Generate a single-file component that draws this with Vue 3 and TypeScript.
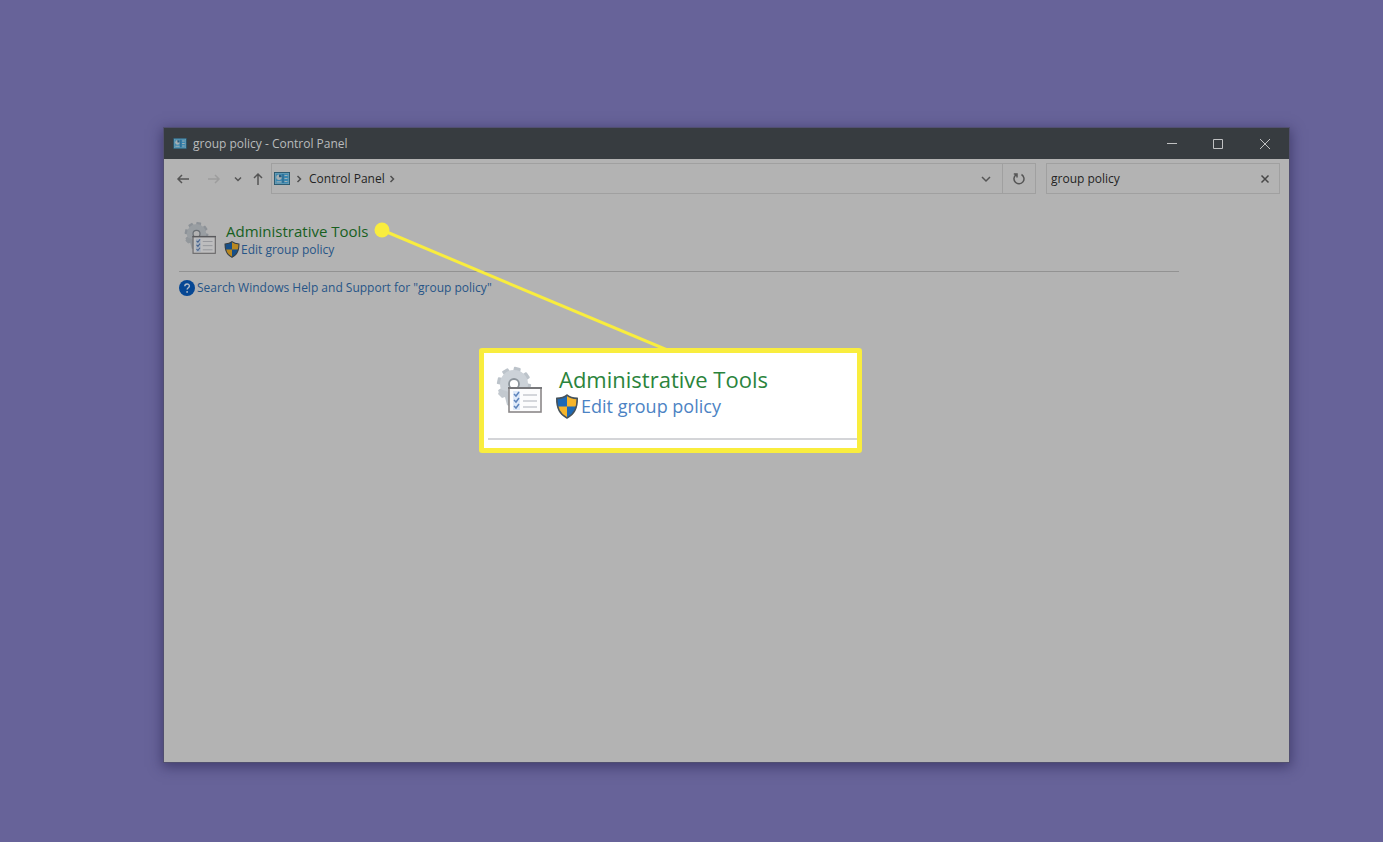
<script setup lang="ts">
import { ref } from 'vue'

const query = ref('group policy')
const teeth = [0, 45, 90, 135, 180, 225, 270, 315]
</script>

<template>
  <main class="desktop">
    <svg class="defs" width="0" height="0" aria-hidden="true">
      <defs>
        <symbol id="panel" viewBox="0 0 16 13">
          <rect x="0.5" y="0.5" width="15" height="12" fill="#4fb4ea" stroke="#35718f" />
          <rect x="1.300" y="1.300" width="13.400" height="10.400" fill="none" stroke="#93d3f0" stroke-width="0.8" />
          <circle cx="5" cy="5.200" r="2.700" fill="#dce9ee" />
          <path d="M5 5.200V2.500A2.700 2.700 0 0 1 7.700 5.200Z" fill="#2f78a8" />
          <path d="M2.500 9.800H7.500M10.500 3.500h3M10.500 6.500h3M10.500 9.500h3" stroke="#d8e9ef" stroke-width="1.200" />
          <path d="M9 2v9" stroke="#2f7fb3" />
        </symbol>
        <symbol id="shield" viewBox="0 0 22 24">
          <path d="M11 1C8 3.4 4.700 4 1.200 4.200C1 12 2.600 19 11 23C19.400 19 21 12 20.800 4.200C17.300 4 14 3.400 11 1Z" fill="#f6b52b" />
          <path d="M11 1C8 3.400 4.700 4 1.200 4.200C1.100 7 1.300 9.700 2 12H11ZM11 12H20C18.500 17 15.800 20.800 11 23Z" fill="#1d69b5" />
          <path d="M11 1C8 3.400 4.700 4 1.200 4.200C1 12 2.600 19 11 23C19.400 19 21 12 20.800 4.200C17.300 4 14 3.400 11 1Z" fill="none" stroke="#46525b" stroke-width="1.500" />
        </symbol>
        <symbol id="tools" viewBox="0 0 46 48">
          <g fill="#bcc3ca">
            <rect v-for="angle in teeth" :key="angle" x="14.500" y="1" width="7" height="9" rx="1" :transform="`rotate(${angle + 12} 18 18)`" />
          </g>
          <circle cx="18" cy="18" r="9.500" fill="none" stroke="#ccd2d8" stroke-width="9" />
          <circle cx="18" cy="18" r="5" fill="none" stroke="#8c949b" stroke-width="1.800" />
          <path d="M4 23l-2 5 4 4 3-1 2 8 2 1V26z" fill="#c3c9cf" />
          <rect x="13" y="22" width="32" height="24" fill="#fcfcfd" stroke="#8b8889" stroke-width="1.600" />
          <path d="M12 22H46" stroke="#77777a" stroke-width="2" />
          <rect x="17" y="25" width="7" height="19" fill="#dfeafa" />
          <path d="M18 28l2 2 3-4M18 34l2 2 3-4M18 40l2 2 3-4" fill="none" stroke="#5f85bd" stroke-width="1.500" />
          <path d="M27 29H41M27 35H41M27 41H41" stroke="#c6c9cf" stroke-width="1.400" />
        </symbol>
      </defs>
    </svg>

    <section class="window">
      <header class="titlebar">
        <svg class="app-icon dim" aria-hidden="true"><use href="#panel" /></svg>
        <h1>group policy - Control Panel</h1>
        <div class="captions">
          <button type="button" aria-label="Minimize"><svg width="12" height="12"><path d="M1 5.500H11" /></svg></button>
          <button type="button" aria-label="Maximize"><svg width="12" height="12"><path d="M1.500 1.500H10.500V10.500H1.500Z" /></svg></button>
          <button type="button" aria-label="Close"><svg width="12" height="12"><path d="M1 1L11 11M11 1L1 11" /></svg></button>
        </div>
      </header>

      <nav class="toolbar" aria-label="Navigation">
        <div class="history">
          <button type="button" class="arrow" aria-label="Back"><svg width="14" height="12"><path d="M13 6H2M6 2L2 6L6 10" /></svg></button>
          <button type="button" class="arrow faded" aria-label="Forward" disabled><svg width="14" height="12"><path d="M1 6H12M8 2L12 6L8 10" /></svg></button>
          <button type="button" class="recent" aria-label="Recent locations"><svg width="8" height="8"><path d="M1 2.500L4 5.500L7 2.500" /></svg></button>
          <button type="button" class="up" aria-label="Up"><svg width="12" height="14"><path d="M6 13V2M2 6L6 2L10 6" /></svg></button>
        </div>
        <div class="address">
          <svg class="place-icon dim" aria-hidden="true"><use href="#panel" /></svg>
          <svg class="chevron" width="6" height="8" aria-hidden="true"><path d="M1.500 1L4.500 4L1.500 7" /></svg>
          <a class="crumb" href="#">Control Panel</a>
          <svg class="chevron" width="6" height="8" aria-hidden="true"><path d="M1.500 1L4.500 4L1.500 7" /></svg>
          <button type="button" class="expand" aria-label="Previous locations"><svg width="10" height="8"><path d="M1 2L5 6L9 2" /></svg></button>
          <button type="button" class="refresh" aria-label="Refresh"><svg width="14" height="14"><path d="M9.500 2.500A5 5 0 1 1 4 2.800M1.800 2H5V5.500" /></svg></button>
        </div>
        <div class="search">
          <input v-model="query" type="text" aria-label="Search Control Panel" />
          <button type="button" aria-label="Clear search" @click="query = ''"><svg width="10" height="10"><path d="M1.500 1.500L8.500 8.500M8.500 1.500L1.500 8.500" /></svg></button>
        </div>
      </nav>

      <div class="content">
        <article class="result">
          <svg class="tools-icon dim" aria-hidden="true"><use href="#tools" /></svg>
          <div class="links">
            <a class="category" href="#">Administrative Tools</a>
            <a class="task" href="#"><svg class="shield dim" aria-hidden="true"><use href="#shield" /></svg>Edit group policy</a>
          </div>
        </article>
        <a class="help" href="#">
          <svg width="16" height="16" viewBox="0 0 16 16" aria-hidden="true">
            <circle cx="8" cy="8" r="8" fill="#064794" />
            <path d="M5.800 6.200C5.800 3.300 10.400 3.300 10.400 6C10.400 7.700 8.100 7.800 8.100 9.600" fill="none" stroke="#b3bdc9" stroke-width="1.400" />
            <circle cx="8.100" cy="11.900" r="0.900" fill="#b3bdc9" />
          </svg>Search Windows Help and Support for "group policy"
        </a>
      </div>

      <svg class="leader" width="300" height="130" aria-hidden="true">
        <path d="M8 8L298 130" stroke="#f9ed3e" stroke-width="3" />
        <circle cx="8" cy="8" r="7.500" fill="#f9ed3e" />
      </svg>
      <aside class="callout" aria-label="Enlarged result">
        <div class="zoomed">
          <svg class="tools-icon" aria-hidden="true"><use href="#tools" /></svg>
          <div class="links">
            <a class="category" href="#">Administrative Tools</a>
            <a class="task" href="#"><svg class="shield" aria-hidden="true"><use href="#shield" /></svg>Edit group policy</a>
          </div>
        </div>
      </aside>
    </section>
  </main>
</template>

<style>
body {
  margin: 0;
}
</style>

<style scoped>
* {
  box-sizing: border-box;
}
.desktop {
  display: flex;
  min-height: 100vh;
  padding: 128px 94px 80px 164px;
  background: #676399;
  font: 12px/16px "Open Sans", "Noto Sans", sans-serif;
}
.defs {
  position: absolute;
}
svg {
  display: block;
  flex: none;
}
button {
  display: flex;
  align-items: center;
  justify-content: center;
  padding: 0;
  border: 0;
  background: none;
}
button svg path,
.chevron path {
  fill: none;
  stroke: currentColor;
}
a {
  text-decoration: none;
}
.dim {
  filter: brightness(0.75);
}
.window {
  position: relative;
  flex: 1;
  background: #b3b3b3;
  box-shadow: 0 0 0 1px #514f70, 0 3px 12px 2px rgba(35, 30, 75, 0.55);
}
.titlebar {
  display: flex;
  align-items: center;
  height: 31px;
  padding-left: 9px;
  background: #373c40;
  color: #b9bbbc;
}
.app-icon {
  width: 14px;
  height: 11px;
}
h1 {
  flex: 1;
  margin: 0 0 0 6px;
  font-size: 12px;
  font-weight: 400;
}
.captions {
  display: flex;
}
.captions button {
  width: 46px;
  height: 31px;
  color: #c0c1c2;
}
.captions button:last-child {
  width: 48px;
}
.toolbar {
  display: flex;
  align-items: center;
  height: 39px;
  padding-right: 9px;
  color: #505050;
}
.history {
  display: flex;
  align-items: center;
  width: 107px;
  padding-left: 12px;
}
.history button {
  height: 24px;
  color: #555;
}
.history svg,
.expand svg,
.refresh svg {
  stroke-width: 1.5;
}
.arrow {
  width: 14px;
  margin-right: 17px;
}
.history .faded {
  color: #9d9d9d;
}
.recent {
  width: 8px;
  margin-left: -4px;
}
.up {
  width: 12px;
  margin-left: 10px;
}
.address,
.search {
  display: flex;
  align-items: center;
  height: 31px;
  border: 1px solid #a0a0a0;
}
.address {
  flex: 1;
  padding-left: 2px;
}
.place-icon {
  width: 16px;
  height: 13px;
  margin-right: 6px;
}
.chevron {
  stroke-width: 1.5;
}
.crumb {
  margin: 0 4px 0 7px;
  color: #242424;
}
.expand {
  width: 33px;
  height: 29px;
  margin-left: auto;
  color: #555;
}
.refresh {
  width: 33px;
  height: 29px;
  border-left: 1px solid #a0a0a0;
  color: #555;
}
.search {
  width: 234px;
  margin-left: 10px;
}
.search input {
  flex: 1;
  min-width: 0;
  padding: 0 0 0 4px;
  border: 0;
  outline: 0;
  background: none;
  color: #242424;
  font: inherit;
}
.search button {
  width: 28px;
  height: 29px;
  color: #484848;
}
.search svg {
  stroke-width: 1.5;
}
.content {
  padding: 23px 15px 0;
}
.result {
  display: flex;
  width: calc(100% - 95px);
  height: 51px;
  padding-left: 5px;
  border-bottom: 1px solid #929292;
}
.result .tools-icon {
  width: 32px;
  height: 34px;
}
.links {
  display: flex;
  flex-direction: column;
  align-items: flex-start;
}
.result .links {
  margin-left: 8px;
}
.result .category {
  padding-left: 2px;
  color: #17601f;
  font-size: 15px;
  line-height: 20px;
}
.task {
  display: flex;
  align-items: center;
}
.result .task,
.help {
  color: #275587;
}
.result .shield {
  width: 16px;
  height: 17px;
  margin-right: 1px;
}
.help {
  display: inline-flex;
  align-items: center;
  gap: 2px;
  margin-top: 8px;
}
.leader {
  position: absolute;
  top: 94px;
  left: 210px;
}
.callout {
  position: absolute;
  top: 220px;
  left: 315px;
  width: 383px;
  padding: 0 0 8px 4px;
  border: 5px solid #f9ed3e;
  border-radius: 3px;
  background: #fff;
}
.zoomed {
  display: flex;
  height: 87px;
  padding: 13px 0 0 8px;
  border-bottom: 2px solid #d4d5d8;
}
.zoomed .tools-icon {
  width: 46px;
  height: 48px;
}
.zoomed .links {
  margin-left: 13px;
}
.zoomed .category {
  padding-left: 4px;
  color: #2b843c;
  font-size: 22px;
  line-height: 26px;
}
.zoomed .task {
  color: #4c83c4;
  font-size: 18px;
  line-height: 28px;
}
.zoomed .shield {
  width: 24px;
  height: 25px;
  margin-right: 2px;
}
</style>
